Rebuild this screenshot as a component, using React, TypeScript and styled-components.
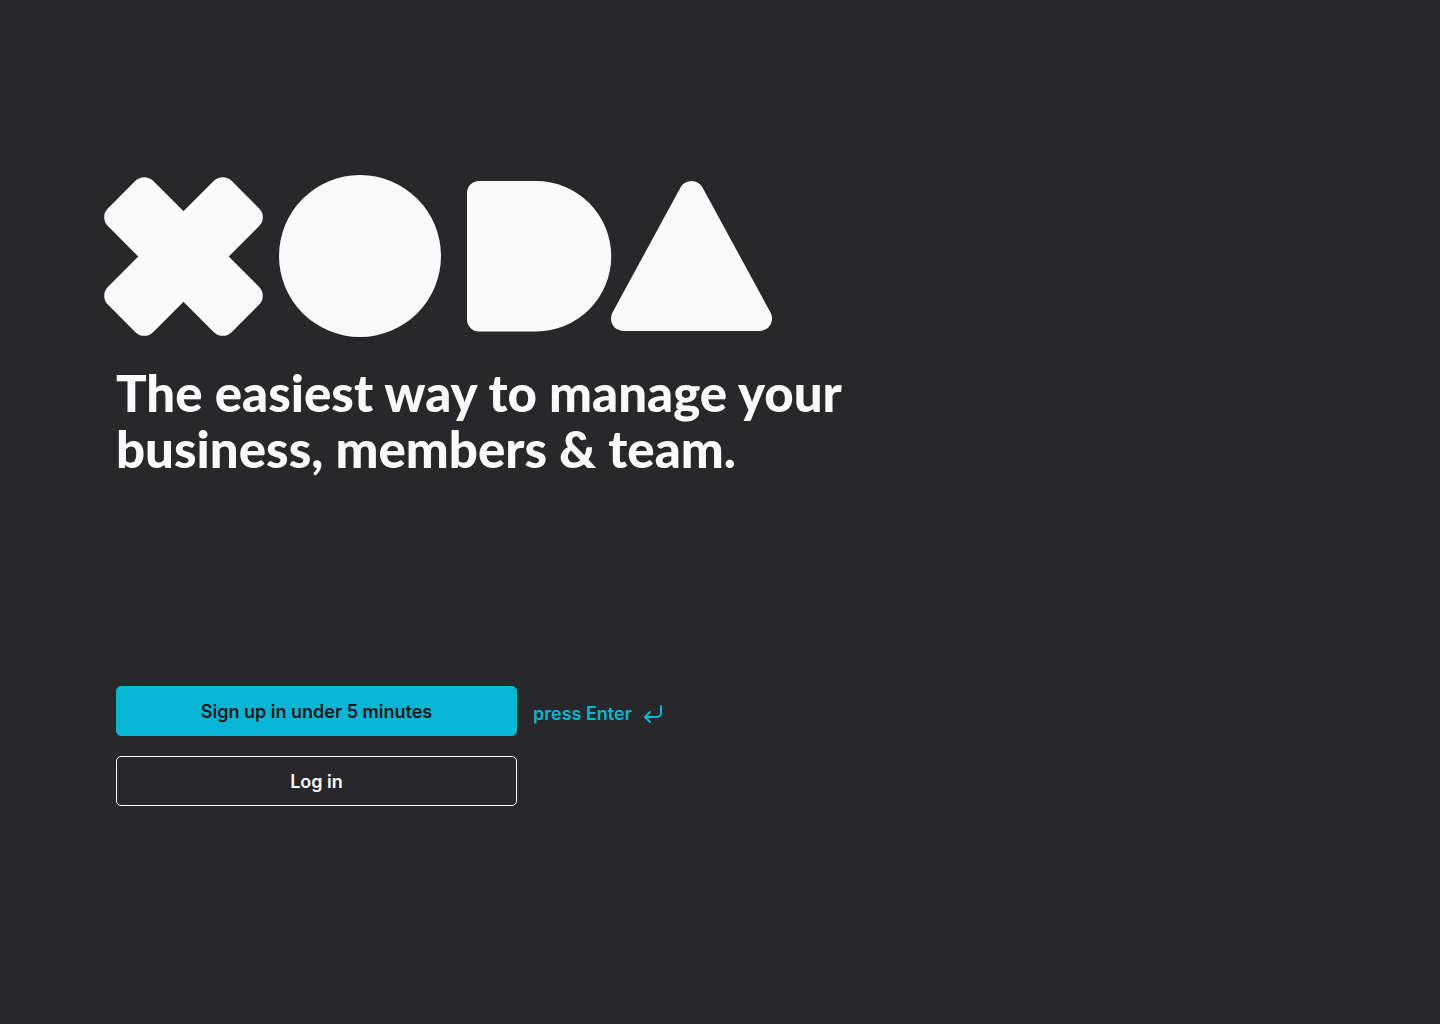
import React, { useEffect, useRef } from "react";
import styled, { createGlobalStyle, css } from "styled-components";
import { CornerDownLeft } from "lucide-react";

const colors = {
  background: "#28282a",
  cyan: "#08b5d5",
  white: "#fafafa",
  ink: "#18181b",
};

const GlobalStyle = createGlobalStyle`
  *, *::before, *::after {
    box-sizing: border-box;
  }

  body {
    margin: 0;
    background: ${colors.background};
    color: ${colors.white};
    font-family: Inter, "Liberation Sans", sans-serif;
    -webkit-font-smoothing: antialiased;
  }
`;

const Page = styled.main`
  display: flex;
  flex-direction: column;
  min-height: 100vh;
  padding: 175px 104px 96px;
`;

const Logo = styled.svg`
  display: block;
  width: 668px;
  max-width: 100%;
  height: auto;
  fill: ${colors.white};
`;

const Content = styled.div`
  display: flex;
  flex-direction: column;
  gap: 209px;
  padding: 28px 12px 0;
`;

const Heading = styled.h1`
  margin: 0;
  font-family: Lato, "Liberation Sans", sans-serif;
  font-size: 51px;
  font-weight: 900;
  line-height: 56px;
`;

const Actions = styled.div`
  display: flex;
  flex-direction: column;
  gap: 20px;
`;

const ActionRow = styled.div`
  display: flex;
  flex-wrap: wrap;
  align-items: center;
  gap: 16px;
`;

const Button = styled.button<{ $variant: "primary" | "outline" }>`
  width: 401px;
  max-width: 100%;
  height: 50px;
  padding: 2px 16px 0;
  border: 1px solid ${colors.white};
  border-radius: 5px;
  background: transparent;
  color: ${colors.white};
  font: inherit;
  font-size: 18px;
  font-weight: 600;
  line-height: 24px;
  cursor: pointer;

  ${({ $variant }) =>
    $variant === "primary" &&
    css`
      border-color: ${colors.cyan};
      background: ${colors.cyan};
      color: ${colors.ink};
    `}
`;

const Hint = styled.span`
  display: flex;
  align-items: center;
  gap: 9px;
  padding-top: 6px;
  color: ${colors.cyan};
  font-size: 18px;
  font-weight: 600;
  line-height: 24px;
`;

function XodaLogo() {
  return (
    <Logo viewBox="0 0 668 162" role="img" aria-label="Xoda">
      <g transform="translate(79.5 81.5)">
        <rect x="-87.5" y="-32" width="175" height="64" rx="12.5" transform="rotate(45)" />
        <rect x="-87.5" y="-32" width="175" height="64" rx="12.5" transform="rotate(-45)" />
      </g>
      <circle cx="256" cy="81" r="81" />
      <path d="M375 6h57a75.25 75.25 0 0 1 0 150.5h-57a12 12 0 0 1-12-12V18a12 12 0 0 1 12-12z" />
      <path d="M576.5 12.5a12.5 12.5 0 0 1 22 0l68 125a12.5 12.5 0 0 1-11 18.5h-136a12.5 12.5 0 0 1-11-18.5z" />
    </Logo>
  );
}

export default function App() {
  const signUp = useRef<HTMLButtonElement>(null);

  useEffect(() => {
    const onKeyDown = (event: KeyboardEvent) => {
      if (event.key === "Enter" && event.target === document.body) {
        signUp.current?.click();
      }
    };
    window.addEventListener("keydown", onKeyDown);
    return () => window.removeEventListener("keydown", onKeyDown);
  }, []);

  return (
    <>
      <GlobalStyle />
      <Page>
        <XodaLogo />
        <Content>
          <Heading>
            The easiest way to manage your
            <br />
            business, members &amp; team.
          </Heading>
          <Actions>
            <ActionRow>
              <Button ref={signUp} type="button" $variant="primary">
                Sign up in under 5 minutes
              </Button>
              <Hint>
                press Enter
                <CornerDownLeft size={24} strokeWidth={2} aria-hidden="true" />
              </Hint>
            </ActionRow>
            <ActionRow>
              <Button type="button" $variant="outline">
                Log in
              </Button>
            </ActionRow>
          </Actions>
        </Content>
      </Page>
    </>
  );
}
